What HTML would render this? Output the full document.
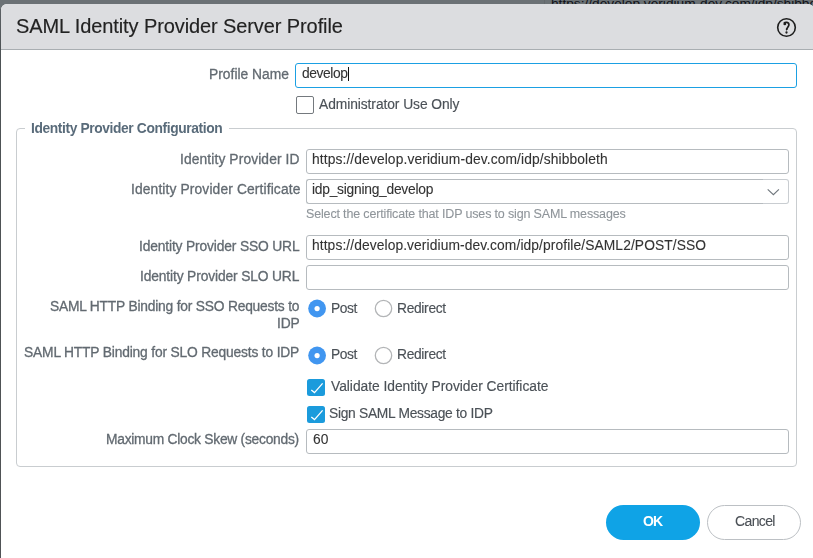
<!DOCTYPE html>
<html><head><meta charset="utf-8">
<style>
html,body{margin:0;padding:0;}
body{width:813px;height:558px;overflow:hidden;position:relative;background:#6b7175;font-family:"Liberation Sans",sans-serif;}
.t{position:absolute;white-space:nowrap;line-height:1;will-change:transform;font-family:"Liberation Sans",sans-serif;}
.abs{position:absolute;box-sizing:border-box;}
#bgtext{position:absolute;left:551px;top:-2.7px;font-size:13.7px;line-height:1;color:#101218;white-space:nowrap;}
#bgline{position:absolute;left:544px;top:0;width:1px;height:4px;background:#63686c;}
#dlg{position:absolute;left:1px;top:4px;width:813px;height:600px;background:#fff;border-radius:6px 6px 0 0;}
#col0{position:absolute;left:0;top:9px;width:1px;height:560px;background:linear-gradient(#5c6165,#4d5255 40px,#505356);}
#hdr{position:absolute;left:1px;top:4px;width:813px;height:45px;background:#dcdde0;border-radius:6px 6px 0 0;border-bottom:1px solid #a9aeb2;}
.inp{position:absolute;box-sizing:border-box;border:1px solid #b6bbbf;border-radius:3px;background:#fff;}
#fs{position:absolute;left:16px;top:128px;width:781px;height:339px;box-sizing:border-box;border:1px solid #c9cdd0;border-radius:4px;}
#legbg{position:absolute;left:25px;top:120px;width:204px;height:16px;background:#fff;}
.cb{position:absolute;box-sizing:border-box;width:17px;height:17px;border-radius:2.5px;}
.rad{position:absolute;box-sizing:border-box;width:18px;height:18px;border-radius:50%;}
</style></head><body>
<div id="bgtext">https://develop.veridium-dev.com/idp/shibboleth</div>
<div id="bgline"></div>
<div id="col0"></div>
<div id="dlg"></div>
<div id="hdr"></div>
<svg class="abs" style="left:776px;top:17px" width="22" height="22" viewBox="0 0 22 22">
 <circle cx="10.5" cy="10.5" r="8.8" fill="none" stroke="#1e1e1e" stroke-width="1.6"/>
 <circle cx="8.8" cy="6.9" r="1.4" fill="#1e1e1e"/>
 <path d="M8.0 6.2 C9.3 4.9 12.9 4.9 12.9 7.8 C12.9 9.8 10.9 10.3 10.6 13.0" fill="none" stroke="#1e1e1e" stroke-width="1.75"/>
 <path d="M9.8 11.4 L11.5 11.6 L10.6 14.2 Z" fill="#1e1e1e"/>
 <circle cx="10.5" cy="15.5" r="1.15" fill="#1e1e1e"/>
</svg>
<div class="inp" style="left:295px;top:63px;width:502px;height:25px;border-color:#1ba0e3;"></div>
<div class="abs" style="left:348px;top:67px;width:1px;height:14px;background:#111;"></div>
<div class="cb" style="left:296px;top:96px;width:18px;height:18px;border:1.6px solid #74797e;border-radius:2px;"></div>
<div id="fs"></div>
<div id="legbg"></div>
<div class="inp" style="left:306px;top:149px;width:483px;height:25px;"></div>
<div class="inp" style="left:306px;top:179px;width:458px;height:25px;border-radius:3px 0 0 3px;border-right:none;"></div>
<div class="inp" style="left:763px;top:179px;width:26px;height:25px;border-radius:0 3px 3px 0;border-color:#c9cdd1;border-left:none;"></div>
<svg class="abs" style="left:765px;top:186px" width="16" height="11" viewBox="0 0 16 11">
 <path d="M2.7 3.3 L8.4 8.7 L13.9 3.3" fill="none" stroke="#70777d" stroke-width="1.15"/>
</svg>
<div class="inp" style="left:306px;top:235px;width:483px;height:25px;"></div>
<div class="inp" style="left:306px;top:265px;width:483px;height:25px;"></div>
<div class="inp" style="left:306px;top:429px;width:483px;height:25px;"></div>
<!-- radios -->
<svg class="abs" style="left:306px;top:298px" width="22" height="22" viewBox="0 0 22 22"><circle cx="11.1" cy="10.5" r="8.9" fill="#4196f0"/><circle cx="11.1" cy="10.6" r="2.6" fill="#fff"/></svg>
<svg class="abs" style="left:373px;top:298px" width="22" height="22" viewBox="0 0 22 22"><circle cx="10.5" cy="10.5" r="8.2" fill="#fff" stroke="#b3b5b7" stroke-width="1.3"/></svg>
<svg class="abs" style="left:306px;top:344.5px" width="22" height="22" viewBox="0 0 22 22"><circle cx="11.1" cy="10.5" r="8.9" fill="#4196f0"/><circle cx="11.1" cy="10.6" r="2.6" fill="#fff"/></svg>
<svg class="abs" style="left:373px;top:344.5px" width="22" height="22" viewBox="0 0 22 22"><circle cx="10.5" cy="10.5" r="8.2" fill="#fff" stroke="#b3b5b7" stroke-width="1.3"/></svg>
<!-- checkboxes -->
<div class="cb" style="left:307px;top:379px;width:18px;background:#1b9bdc;">
 <svg width="18" height="17" viewBox="0 0 18 17" style="position:absolute;left:0;top:0"><path d="M4.3 10.9 L7.5 13.6 L15.6 4.4" fill="none" stroke="#fff" stroke-width="1.3"/></svg>
</div>
<div class="cb" style="left:307px;top:406px;width:18px;background:#1b9bdc;">
 <svg width="18" height="17" viewBox="0 0 18 17" style="position:absolute;left:0;top:0"><path d="M4.3 10.9 L7.5 13.6 L15.6 4.4" fill="none" stroke="#fff" stroke-width="1.3"/></svg>
</div>
<!-- buttons -->
<div class="abs" style="left:606px;top:505px;width:94px;height:35px;border-radius:17.5px;background:#0fa3e6;"></div>
<div class="abs" style="left:707px;top:505px;width:94px;height:35px;border-radius:17.5px;border:1px solid #bcc0c4;background:#fff;"></div>
<span class="t" style="left:15.60px;top:15.87px;font-size:20px;font-weight:normal;color:#222222;letter-spacing:-0.100px;-webkit-text-stroke:0.15px #222222">SAML Identity Provider Server Profile</span>
<span class="t" style="left:209.00px;top:67.92px;font-size:13.8px;font-weight:normal;color:#626a71;letter-spacing:0.018px;-webkit-text-stroke:0.3px #626a71">Profile Name</span>
<span class="t" style="left:301.50px;top:66.62px;font-size:13.8px;font-weight:normal;color:#333333;letter-spacing:-0.417px;-webkit-text-stroke:0.1px #333333">develop</span>
<span class="t" style="left:318.80px;top:97.62px;font-size:13.8px;font-weight:normal;color:#4b5157;letter-spacing:-0.067px;-webkit-text-stroke:0.15px #4b5157">Administrator Use Only</span>
<span class="t" style="left:30.80px;top:121.82px;font-size:13.8px;font-weight:bold;color:#596b7a;letter-spacing:-0.383px;-webkit-text-stroke:0px #596b7a">Identity Provider Configuration</span>
<span class="t" style="left:180.20px;top:153.22px;font-size:13.8px;font-weight:normal;color:#626a71;letter-spacing:0.116px;-webkit-text-stroke:0.3px #626a71">Identity Provider ID</span>
<span class="t" style="left:311.60px;top:152.72px;font-size:13.8px;font-weight:normal;color:#333333;letter-spacing:0.113px;-webkit-text-stroke:0.1px #333333">https://develop.veridium-dev.com/idp/shibboleth</span>
<span class="t" style="left:130.70px;top:182.62px;font-size:13.8px;font-weight:normal;color:#626a71;letter-spacing:0.132px;-webkit-text-stroke:0.3px #626a71">Identity Provider Certificate</span>
<span class="t" style="left:311.80px;top:182.52px;font-size:13.8px;font-weight:normal;color:#333333;letter-spacing:-0.250px;-webkit-text-stroke:0.1px #333333">idp_signing_develop</span>
<span class="t" style="left:305.60px;top:207.92px;font-size:12.5px;font-weight:normal;color:#8f959a;letter-spacing:-0.156px;-webkit-text-stroke:0.1px #8f959a">Select the certificate that IDP uses to sign SAML messages</span>
<span class="t" style="left:138.90px;top:240.02px;font-size:13.8px;font-weight:normal;color:#626a71;letter-spacing:-0.146px;-webkit-text-stroke:0.3px #626a71">Identity Provider SSO URL</span>
<span class="t" style="left:311.60px;top:239.12px;font-size:13.8px;font-weight:normal;color:#333333;letter-spacing:0.095px;-webkit-text-stroke:0.1px #333333">https://develop.veridium-dev.com/idp/profile/SAML2/POST/SSO</span>
<span class="t" style="left:139.60px;top:269.92px;font-size:13.8px;font-weight:normal;color:#626a71;letter-spacing:-0.133px;-webkit-text-stroke:0.3px #626a71">Identity Provider SLO URL</span>
<span class="t" style="left:49.70px;top:299.92px;font-size:13.8px;font-weight:normal;color:#626a71;letter-spacing:-0.206px;-webkit-text-stroke:0.3px #626a71">SAML HTTP Binding for SSO Requests to</span>
<span class="t" style="left:276.60px;top:316.92px;font-size:13.8px;font-weight:normal;color:#626a71;letter-spacing:-0.150px;-webkit-text-stroke:0.3px #626a71">IDP</span>
<span class="t" style="left:24.20px;top:345.92px;font-size:13.8px;font-weight:normal;color:#626a71;letter-spacing:-0.172px;-webkit-text-stroke:0.3px #626a71">SAML HTTP Binding for SLO Requests to IDP</span>
<span class="t" style="left:330.80px;top:301.92px;font-size:13.8px;font-weight:normal;color:#4b5157;letter-spacing:-0.433px;-webkit-text-stroke:0.15px #4b5157">Post</span>
<span class="t" style="left:397.40px;top:301.92px;font-size:13.8px;font-weight:normal;color:#4b5157;letter-spacing:-0.314px;-webkit-text-stroke:0.15px #4b5157">Redirect</span>
<span class="t" style="left:330.80px;top:348.42px;font-size:13.8px;font-weight:normal;color:#4b5157;letter-spacing:-0.433px;-webkit-text-stroke:0.15px #4b5157">Post</span>
<span class="t" style="left:397.40px;top:348.42px;font-size:13.8px;font-weight:normal;color:#4b5157;letter-spacing:-0.314px;-webkit-text-stroke:0.15px #4b5157">Redirect</span>
<span class="t" style="left:330.60px;top:380.02px;font-size:13.8px;font-weight:normal;color:#4b5157;letter-spacing:-0.024px;-webkit-text-stroke:0.15px #4b5157">Validate Identity Provider Certificate</span>
<span class="t" style="left:329.40px;top:407.02px;font-size:13.8px;font-weight:normal;color:#4b5157;letter-spacing:-0.287px;-webkit-text-stroke:0.15px #4b5157">Sign SAML Message to IDP</span>
<span class="t" style="left:106.40px;top:432.92px;font-size:13.8px;font-weight:normal;color:#626a71;letter-spacing:-0.259px;-webkit-text-stroke:0.3px #626a71">Maximum Clock Skew (seconds)</span>
<span class="t" style="left:312.90px;top:432.52px;font-size:13.8px;font-weight:normal;color:#333333;letter-spacing:0.100px;-webkit-text-stroke:0.1px #333333">60</span>
<span class="t" style="left:643.00px;top:513.95px;font-size:14px;font-weight:bold;color:#ffffff;letter-spacing:-1.000px;-webkit-text-stroke:0px #ffffff">OK</span>
<span class="t" style="left:734.50px;top:514.25px;font-size:14px;font-weight:normal;color:#4a4f55;letter-spacing:-0.620px;-webkit-text-stroke:0.1px #4a4f55">Cancel</span>
</body></html>
